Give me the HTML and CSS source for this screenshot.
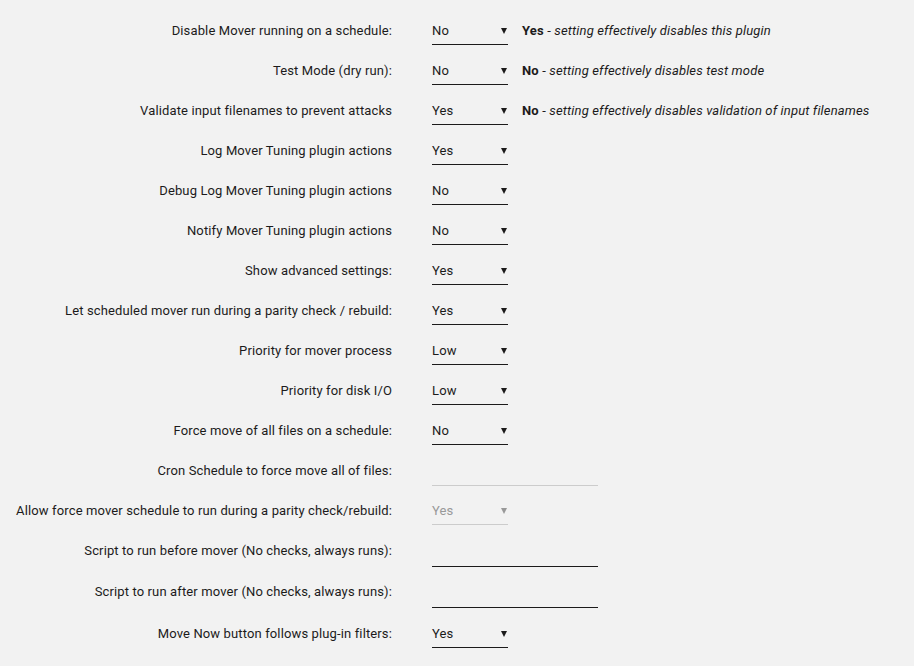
FILE: index.html
```html
<!DOCTYPE html>
<html>
<head>
<meta charset="utf-8">
<link rel="stylesheet" href="styles.css">
</head>
<body>
<div class="form">
  <div class="row"><div class="label">Disable Mover running on a schedule:</div><div class="field"><div class="select"><span>No</span><i class="arrow"></i></div><div class="desc"><b>Yes</b> - <em>setting effectively disables this plugin</em></div></div></div>
  <div class="row"><div class="label">Test Mode (dry run):</div><div class="field"><div class="select"><span>No</span><i class="arrow"></i></div><div class="desc"><b>No</b> - <em>setting effectively disables test mode</em></div></div></div>
  <div class="row"><div class="label">Validate input filenames to prevent attacks</div><div class="field"><div class="select"><span>Yes</span><i class="arrow"></i></div><div class="desc"><b>No</b> - <em>setting effectively disables validation of input filenames</em></div></div></div>
  <div class="row"><div class="label">Log Mover Tuning plugin actions</div><div class="field"><div class="select"><span>Yes</span><i class="arrow"></i></div></div></div>
  <div class="row"><div class="label">Debug Log Mover Tuning plugin actions</div><div class="field"><div class="select"><span>No</span><i class="arrow"></i></div></div></div>
  <div class="row"><div class="label">Notify Mover Tuning plugin actions</div><div class="field"><div class="select"><span>No</span><i class="arrow"></i></div></div></div>
  <div class="row"><div class="label">Show advanced settings:</div><div class="field"><div class="select"><span>Yes</span><i class="arrow"></i></div></div></div>
  <div class="row"><div class="label">Let scheduled mover run during a parity check / rebuild:</div><div class="field"><div class="select"><span>Yes</span><i class="arrow"></i></div></div></div>
  <div class="row"><div class="label">Priority for mover process</div><div class="field"><div class="select"><span>Low</span><i class="arrow"></i></div></div></div>
  <div class="row"><div class="label">Priority for disk I/O</div><div class="field"><div class="select"><span>Low</span><i class="arrow"></i></div></div></div>
  <div class="row"><div class="label">Force move of all files on a schedule:</div><div class="field"><div class="select"><span>No</span><i class="arrow"></i></div></div></div>
  <div class="row"><div class="label">Cron Schedule to force move all of files:</div><div class="field"><div class="input input-disabled"></div></div></div>
  <div class="row"><div class="label">Allow force mover schedule to run during a parity check/rebuild:</div><div class="field"><div class="select select-disabled"><span>Yes</span><i class="arrow"></i></div></div></div>
  <div class="row row-tall"><div class="label">Script to run before mover (No checks, always runs):</div><div class="field"><div class="input"></div></div></div>
  <div class="row row-tall row-last-input"><div class="label">Script to run after mover (No checks, always runs):</div><div class="field"><div class="input"></div></div></div>
  <div class="row"><div class="label">Move Now button follows plug-in filters:</div><div class="field"><div class="select"><span>Yes</span><i class="arrow"></i></div></div></div>
</div>
</body>
</html>
```
FILE: styles.css
```css
html, body {
  margin: 0;
  padding: 0;
  background: #f2f2f2;
}
body {
  font-family: Roboto, "Liberation Sans", sans-serif;
  font-size: 13px;
  letter-spacing: 0.13px;
  color: #1c1b1b;
}
.form {
  padding-top: 10px;
}
.row {
  display: grid;
  grid-template-columns: 392px 1fr;
  column-gap: 40px;
  height: 40px;
}
.row-tall {
  height: 41px;
}
.row-last-input {
  height: 42px;
}
.label {
  text-align: right;
  line-height: 20px;
  padding-top: 11px;
  white-space: nowrap;
}
.field {
  display: flex;
  align-items: flex-start;
  gap: 14px;
}
.select {
  margin-top: 10px;
  width: 76px;
  height: 25px;
  padding-top: 1px;
  box-sizing: border-box;
  border-bottom: 1px solid #1c1b1b;
  display: flex;
  justify-content: space-between;
  line-height: 20px;
}
.arrow {
  width: 0;
  height: 0;
  margin-top: 7px;
  margin-right: 1px;
  border-left: 3px solid transparent;
  border-right: 3px solid transparent;
  border-top: 6px solid #1c1b1b;
}
.select-disabled {
  color: #999;
  border-bottom-color: #ccc;
}
.select-disabled .arrow {
  border-top-color: #999;
}
.desc {
  margin-top: 11px;
  line-height: 20px;
  white-space: nowrap;
  letter-spacing: 0.15px;
}
.desc b {
  font-weight: 700;
}
.input {
  margin-top: 10px;
  width: 166px;
  height: 26px;
  border-bottom: 1px solid #1c1b1b;
}
.input-disabled {
  height: 25px;
  border-bottom-color: #ccc;
}
```
